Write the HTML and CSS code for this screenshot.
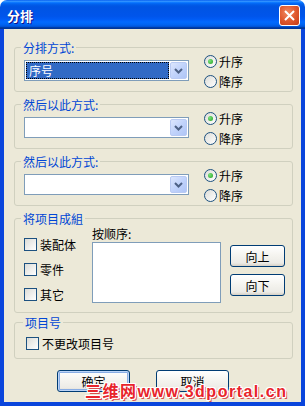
FILE: index.html
```html
<!DOCTYPE html>
<html lang="zh-CN">
<head>
    <meta charset="UTF-8">
    <title>分排</title>
    <link rel="stylesheet" href="styles.css">
</head>
<body>
    <div class="window">
        <div class="titlebar">
            <span class="title">分排</span>
            <span class="close">
                <svg width="13" height="13" viewBox="0 0 13 13"><path d="M2 2 L11 11 M11 2 L2 11" stroke="#fff" stroke-width="2" fill="none"/></svg>
            </span>
        </div>
        <div class="client">
            <fieldset class="group group-sort first">
                <legend>分排方式:</legend>
                <div class="sort-row">
                    <div class="combo selected">
                        <span class="combo-text">序号</span>
                        <span class="combo-btn"><svg width="9" height="6" viewBox="0 0 9 6"><path d="M1 1 L4.5 4.5 L8 1" stroke="#4D6185" stroke-width="2" fill="none"/></svg></span>
                    </div>
                    <div class="radios">
                        <label class="radio"><span class="radio-box checked"></span>升序</label>
                        <label class="radio"><span class="radio-box"></span>降序</label>
                    </div>
                </div>
            </fieldset>

            <fieldset class="group group-sort">
                <legend>然后以此方式:</legend>
                <div class="sort-row">
                    <div class="combo">
                        <span class="combo-text"></span>
                        <span class="combo-btn"><svg width="9" height="6" viewBox="0 0 9 6"><path d="M1 1 L4.5 4.5 L8 1" stroke="#4D6185" stroke-width="2" fill="none"/></svg></span>
                    </div>
                    <div class="radios">
                        <label class="radio"><span class="radio-box checked"></span>升序</label>
                        <label class="radio"><span class="radio-box"></span>降序</label>
                    </div>
                </div>
            </fieldset>

            <fieldset class="group group-sort">
                <legend>然后以此方式:</legend>
                <div class="sort-row">
                    <div class="combo">
                        <span class="combo-text"></span>
                        <span class="combo-btn"><svg width="9" height="6" viewBox="0 0 9 6"><path d="M1 1 L4.5 4.5 L8 1" stroke="#4D6185" stroke-width="2" fill="none"/></svg></span>
                    </div>
                    <div class="radios">
                        <label class="radio"><span class="radio-box checked"></span>升序</label>
                        <label class="radio"><span class="radio-box"></span>降序</label>
                    </div>
                </div>
            </fieldset>

            <fieldset class="group group-items">
                <legend>将项目成組</legend>
                <div class="items-row">
                    <div class="checks">
                        <label class="check"><span class="check-box"></span>装配体</label>
                        <label class="check"><span class="check-box"></span>零件</label>
                        <label class="check"><span class="check-box"></span>其它</label>
                    </div>
                    <div class="order">
                        <div class="order-label">按顺序:</div>
                        <div class="listbox"></div>
                    </div>
                    <div class="order-btns">
                        <button class="btn small">向上</button>
                        <button class="btn small">向下</button>
                    </div>
                </div>
            </fieldset>

            <fieldset class="group group-number">
                <legend>项目号</legend>
                <label class="check"><span class="check-box"></span>不更改项目号</label>
            </fieldset>

            <div class="actions">
                <button class="btn default">确定</button>
                <button class="btn">取消</button>
            </div>
        </div>
        <div class="watermark">三维网www.3dportal.cn</div>
    </div>
</body>
</html>
```

FILE: styles.css
```css
* {
    margin: 0;
    padding: 0;
    box-sizing: border-box;
}
body {
    font-family: "Noto Sans CJK SC", "Liberation Sans", sans-serif;
    font-size: 12px;
    background-color: #ffffff;
}
.window {
    position: relative;
    width: 305px;
    height: 406px;
    display: flex;
    flex-direction: column;
}
.titlebar {
    height: 29px;
    border-radius: 7px 7px 0 0;
    background: linear-gradient(to bottom, #0058EE 0%, #3593FF 4%, #288EFF 6%, #127DFF 8%, #036FFC 10%, #0262EE 14%, #0057E5 20%, #0054E3 24%, #0055EB 56%, #005BF5 66%, #026AFE 76%, #0062EF 86%, #0052D6 92%, #0040AB 94%, #003092 100%);
    display: flex;
    align-items: center;
    justify-content: space-between;
    padding: 1px 5px 0 7px;
}
.title {
    color: #ffffff;
    font-weight: bold;
    font-size: 13px;
    text-shadow: 1px 1px #0F1089;
}
.close {
    width: 21px;
    height: 21px;
    border: 1px solid #ffffff;
    border-radius: 3px;
    background: radial-gradient(circle at 40% 35%, #F08A62 0%, #E0592F 50%, #C43A16 100%);
    display: flex;
    align-items: center;
    justify-content: center;
}
.client {
    flex: 1;
    background-color: #ECE9D8;
    border: solid #0A45DC;
    border-width: 0 4px 4px 4px;
    padding-top: 12px;
}
.group {
    border: 1px solid #D0D0BF;
    border-radius: 3px;
    margin: 6px 8px 0 10px;
    padding: 0 0 0 9px;
}
.group.first {
    margin-top: 0;
}
.group legend {
    color: #0046D5;
    line-height: 13px;
    padding: 0 2px;
    margin-left: -3px;
}
.group-sort {
    height: 51px;
}
.sort-row {
    display: flex;
    align-items: flex-start;
}
.combo {
    width: 165px;
    height: 21px;
    margin-top: 6px;
    border: 1px solid #7F9DB9;
    background-color: #ffffff;
    padding: 1px;
    display: flex;
}
.combo-text {
    flex: 1;
    line-height: 17px;
    padding-left: 3px;
    margin-right: 1px;
}
.combo.selected .combo-text {
    background-color: #316AC5;
    color: #ffffff;
    outline: 1px dotted #000000;
    outline-offset: -1px;
}
.combo-btn {
    width: 17px;
    height: 17px;
    border: 1px solid #B9CAF3;
    border-radius: 2px;
    background: linear-gradient(135deg, #DCE6FD 0%, #C1D3FB 50%, #AFC5F6 100%);
    display: flex;
    align-items: center;
    justify-content: center;
}
.radios {
    margin-left: 15px;
    margin-top: -3px;
}
.radio {
    display: flex;
    align-items: center;
    height: 20px;
    gap: 2px;
}
.radio-box {
    width: 13px;
    height: 13px;
    border-radius: 50%;
    border: 1px solid #1C5180;
    background: linear-gradient(135deg, #DCDCD7 0%, #FFFFFF 100%);
    display: flex;
    align-items: center;
    justify-content: center;
}
.radio-box.checked::after {
    content: "";
    width: 5px;
    height: 5px;
    border-radius: 50%;
    background: radial-gradient(circle at 35% 35%, #7BE27B 0%, #21A121 100%);
}
.check {
    display: flex;
    align-items: center;
    height: 24px;
    gap: 3px;
}
.check-box {
    width: 13px;
    height: 13px;
    border: 1px solid #1C5180;
    background: linear-gradient(135deg, #DCDCD7 0%, #FFFFFF 100%);
}
.group-items {
    height: 101px;
}
.items-row {
    display: flex;
    align-items: flex-start;
}
.checks {
    width: 68px;
    margin-top: 7px;
    display: flex;
    flex-direction: column;
    gap: 1px;
}
.order {
    width: 129px;
    margin-top: 2px;
}
.order-label {
    line-height: 13px;
    margin-bottom: 2px;
}
.listbox {
    height: 61px;
    border: 1px solid #7F9DB9;
    background-color: #ffffff;
}
.order-btns {
    margin-left: 9px;
    margin-top: 20px;
    display: flex;
    flex-direction: column;
    gap: 7px;
}
.group-number {
    height: 43px;
    margin-top: 3px;
    padding-left: 11px;
}
.group-number .check {
    margin-top: 4px;
    height: 20px;
}
.btn {
    width: 73px;
    height: 22px;
    border: 1px solid #003C74;
    border-radius: 3px;
    background: linear-gradient(to bottom, #FFFFFF 0%, #F4F3EE 50%, #ECEBE6 85%, #D6D0C5 100%);
    font-family: inherit;
    font-size: 12px;
    color: #000000;
}
.btn.small {
    width: 55px;
}
.btn.default {
    box-shadow: inset 0 0 0 1px #BCD4F6, inset 0 0 0 2px #89ADE4;
}
.actions {
    display: flex;
    gap: 26px;
    margin-top: 11px;
    padding-left: 53px;
}
.watermark {
    position: absolute;
    left: 85px;
    top: 383px;
    font-family: "Liberation Sans", "Noto Sans CJK SC", sans-serif;
    font-weight: bold;
    font-size: 16px;
    line-height: 18px;
    letter-spacing: 1.5px;
    color: #E8242B;
    text-shadow: 1px 0 #fff, -1px 0 #fff, 0 1px #fff, 0 -1px #fff, 1px 1px #fff, -1px -1px #fff, 1px -1px #fff, -1px 1px #fff, 2px 2px #D85050;
}
```
